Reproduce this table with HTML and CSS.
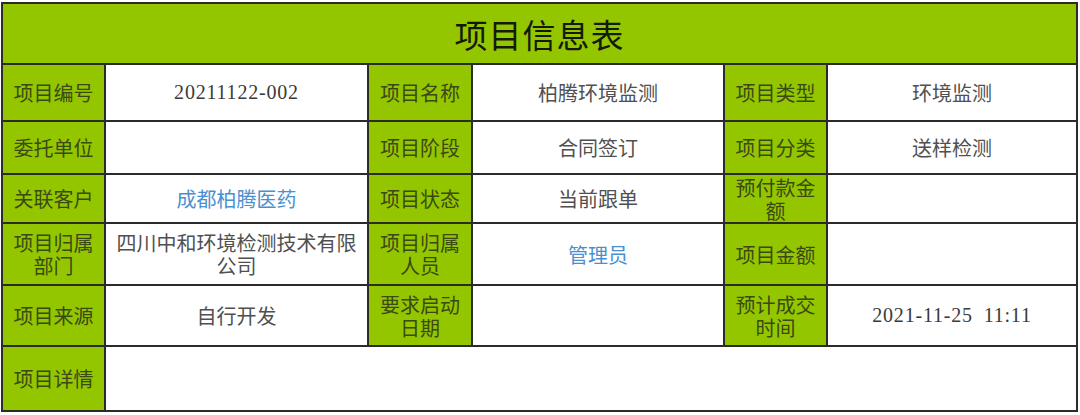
FILE: index.html
```html
<!DOCTYPE html>
<html lang="zh-CN">
<head>
<meta charset="utf-8">
<title>项目信息表</title>
<link rel="stylesheet" href="styles.css">
</head>
<body>
<div class="sheet">
  <div class="cell title">项目信息表</div>

  <div class="cell label">项目编号</div>
  <div class="cell value num">20211122-002</div>
  <div class="cell label">项目名称</div>
  <div class="cell value">柏腾环境监测</div>
  <div class="cell label">项目类型</div>
  <div class="cell value">环境监测</div>

  <div class="cell label">委托单位</div>
  <div class="cell value"></div>
  <div class="cell label">项目阶段</div>
  <div class="cell value">合同签订</div>
  <div class="cell label">项目分类</div>
  <div class="cell value">送样检测</div>

  <div class="cell label">关联客户</div>
  <div class="cell value link">成都柏腾医药</div>
  <div class="cell label">项目状态</div>
  <div class="cell value">当前跟单</div>
  <div class="cell label">预付款金额</div>
  <div class="cell value"></div>

  <div class="cell label">项目归属部门</div>
  <div class="cell value">四川中和环境检测技术有限公司</div>
  <div class="cell label">项目归属人员</div>
  <div class="cell value link">管理员</div>
  <div class="cell label">项目金额</div>
  <div class="cell value"></div>

  <div class="cell label">项目来源</div>
  <div class="cell value">自行开发</div>
  <div class="cell label">要求启动日期</div>
  <div class="cell value"></div>
  <div class="cell label">预计成交时间</div>
  <div class="cell value num">2021-11-25 11:11</div>

  <div class="cell label">项目详情</div>
  <div class="cell value wide"></div>
</div>
</body>
</html>
```

FILE: styles.css
```css
html, body {
  margin: 0;
  padding: 0;
  background: #ffffff;
}

body {
  font-family: "Noto Sans CJK SC", "Noto Sans", sans-serif;
}

.sheet {
  display: grid;
  grid-template-columns: 101px 261px 102px 250px 101px 248px;
  grid-template-rows: 59px 55px 51px 47px 60px 59px 63px;
  gap: 2px;
  padding: 2px;
  margin: 2px 0 0 1px;
  width: max-content;
  background: #2b2b2b;
}

.cell {
  display: flex;
  align-items: center;
  justify-content: center;
  text-align: center;
  padding: 0 4px;
  line-height: 23px;
  font-size: 20px;
}

.title {
  grid-column: 1 / -1;
  background: #94c600;
  color: #141a05;
  font-size: 33px;
  letter-spacing: 1px;
  padding-top: 2px;
}

.label {
  background: #94c600;
  color: #3a4a12;
  padding: 0 8px;
}

.value {
  background: #ffffff;
  color: #505050;
}

.num {
  font-family: "Liberation Serif", serif;
  font-size: 20px;
  letter-spacing: 0.8px;
  word-spacing: 5px;
  color: #3a3a3a;
}

.link {
  color: #4a90d0;
}

.wide {
  grid-column: 2 / -1;
}
```
